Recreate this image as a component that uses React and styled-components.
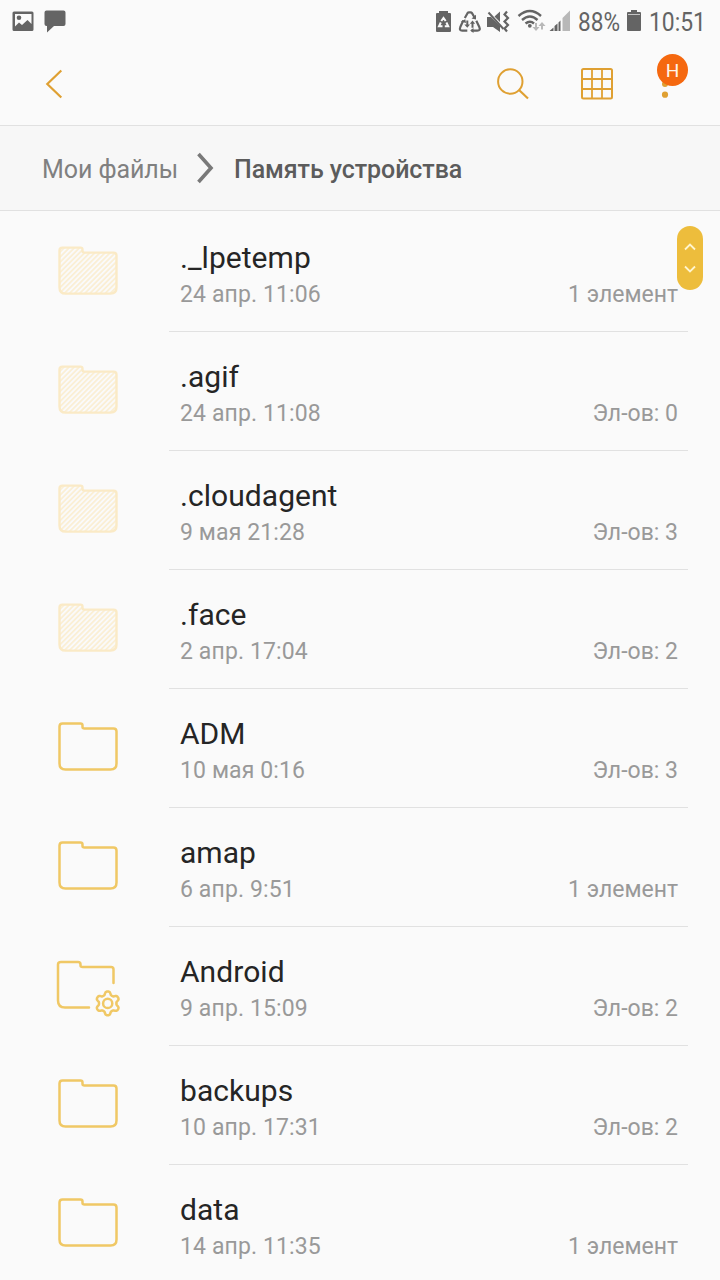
import React from "react";
import styled, { createGlobalStyle } from "styled-components";

const colors = {
  page: "#fafafa",
  path: "#f7f7f7",
  line: "#e1e1e1",
  status: "#646464",
  accent: "#dfa032",
  folder: "#f0c865",
  hidden: "#faeac6",
  title: "#252525",
  muted: "#999999"
};

const GlobalStyle = createGlobalStyle`
  * {
    box-sizing: border-box;
  }
  body {
    margin: 0;
    background: ${colors.page};
    font-family: Roboto, "Noto Sans", sans-serif;
  }
  svg {
    display: block;
    flex: none;
  }
`;

const Screen = styled.div`
  width: 720px;
  height: 1280px;
  overflow: hidden;
  background: ${colors.page};
`;

const StatusBar = styled.div`
  display: flex;
  justify-content: space-between;
  height: 44px;
  padding: 0 12px 0 10px;
  color: ${colors.status};
`;

const StatusGroup = styled.div`
  display: flex;
`;

const StatusText = styled.span`
  width: ${props => props.$width}px;
  font-size: 26px;
  line-height: 44px;
  white-space: nowrap;
  transform: scaleX(${props => props.$squeeze});
  transform-origin: left;
`;

const Toolbar = styled.header`
  display: flex;
  justify-content: space-between;
  align-items: center;
  height: 82px;
  padding: 0 28px 2px 40px;
  border-bottom: 1px solid ${colors.line};
`;

const ToolbarActions = styled.div`
  display: flex;
`;

const IconButton = styled.button`
  position: relative;
  width: 40px;
  height: 48px;
  margin-right: ${props => props.$gap || 0}px;
  padding: 0;
  border: 0;
  background: none;
  color: ${colors.accent};
`;

const Badge = styled.span`
  position: absolute;
  top: -6px;
  left: 5px;
  width: 31px;
  height: 32px;
  border-radius: 50%;
  background: #f5680f;
  color: #fff4e8;
  font: 19px/33px Roboto, sans-serif;
  text-align: center;
`;

const Breadcrumb = styled.nav`
  display: flex;
  align-items: center;
  height: 85px;
  padding: 2px 0 0 42px;
  border-bottom: 1px solid ${colors.line};
  background: ${colors.path};
  font-size: 25px;
  letter-spacing: -0.08px;
`;

const Crumb = styled.span`
  width: ${props => props.$width}px;
  font-weight: ${props => (props.$current ? 500 : 400)};
  color: ${props => (props.$current ? "#5c5c5c" : "#808080")};
  white-space: nowrap;
`;

const FileList = styled.ul`
  position: relative;
  margin: 0;
  padding: 2px 32px 0 50px;
  list-style: none;
`;

const Row = styled.li`
  display: flex;
  height: 119px;
`;

const FolderBox = styled.div`
  width: 119px;
  padding-top: 26px;
`;

const RowBody = styled.div`
  flex: 1;
  padding: 25px 10px 0 11px;
  border-bottom: 1px solid ${colors.line};
`;

const FileName = styled.div`
  font-size: 30px;
  line-height: 40px;
  letter-spacing: 0.05px;
  color: ${colors.title};
`;

const FileInfo = styled.div`
  display: flex;
  justify-content: space-between;
  font-size: 23px;
  line-height: 34px;
  color: ${colors.muted};
`;

const FileDate = styled.span`
  letter-spacing: 0.12px;
`;

const ScrollHandle = styled.div`
  position: absolute;
  top: 15px;
  right: 17.500px;
  width: 26px;
  height: 64px;
  border-radius: 13px;
  background: #edbd3c;
`;

const files = [
  { name: "._lpetemp", date: "24 апр. 11:06", count: "1 элемент", kind: "hidden" },
  { name: ".agif", date: "24 апр. 11:08", count: "Эл-ов: 0", kind: "hidden" },
  { name: ".cloudagent", date: "9 мая 21:28", count: "Эл-ов: 3", kind: "hidden" },
  { name: ".face", date: "2 апр. 17:04", count: "Эл-ов: 2", kind: "hidden" },
  { name: "ADM", date: "10 мая 0:16", count: "Эл-ов: 3" },
  { name: "amap", date: "6 апр. 9:51", count: "1 элемент" },
  { name: "Android", date: "9 апр. 15:09", count: "Эл-ов: 2", kind: "system" },
  { name: "backups", date: "10 апр. 17:31", count: "Эл-ов: 2" },
  { name: "data", date: "14 апр. 11:35", count: "1 элемент" }
];

const folderPath =
  "M12 9H30Q32 9 32 11V12.5Q32 14 34 14H63Q66 14 66 17V49Q66 55 60 55H15Q9 55 9 49V12Q9 9 12 9Z";

// gear outline with six rounded teeth
function gearPath(cx, cy) {
  const points = [];
  for (let i = 0; i <= 72; i++) {
    const a = (i / 72) * Math.PI * 2;
    const r = 10.3 - 1.7 * Math.tanh(1.8 * Math.cos(a * 6));
    points.push(
      `${(cx + r * Math.cos(a)).toFixed(2)} ${(cy + r * Math.sin(a)).toFixed(2)}`
    );
  }
  return `M${points.join("L")}Z`;
}

function Folder({ kind }) {
  if (kind === "system") {
    return (
      <svg width="76" height="66" viewBox="0 0.6 76 66" fill="none" stroke={colors.folder} strokeWidth="2.5" strokeLinecap="round" strokeLinejoin="round">
        <path d="M39 55H15Q8 55 8 48V12Q8 9.500 11 9.500H28Q30.500 9.500 30.500 12V13Q30.500 14.500 32.500 14.500H61Q63.500 14.500 63.500 17V30.500" />
        <path d={gearPath(57.7, 51)} />
        <circle cx="57.7" cy="51" r="4.600" />
      </svg>
    );
  }
  if (kind === "hidden") {
    return (
      <svg width="76" height="66" viewBox="-0.5 0.4 76 66">
        <defs>
          <pattern id="hatch" width="3.6" height="3.6" patternUnits="userSpaceOnUse" patternTransform="rotate(45)">
            <path d="M1.800 0V3.600" stroke={colors.hidden} strokeWidth="1.300" />
          </pattern>
        </defs>
        <path d={folderPath} fill="url(#hatch)" stroke={colors.hidden} strokeWidth="2.4" />
      </svg>
    );
  }
  return (
    <svg width="76" height="66" viewBox="-0.5 0.6 76 66">
      <path d={folderPath} fill="none" stroke={colors.folder} strokeWidth="2.5" />
    </svg>
  );
}

function Notifications() {
  return (
    <svg width="60" height="44" viewBox="10 0 60 44" fill="currentColor">
      <path fillRule="evenodd" d="M14 11.500H32Q33.500 11.500 33.500 13V29.500Q33.500 31 32 31H14Q12.500 31 12.500 29.500V13Q12.500 11.500 14 11.500ZM15 14V26.500L19 22.500L22 25L27.500 20L31.500 24V14Z" />
      <circle cx="19" cy="17.800" r="2.300" />
      <path d="M46.500 10.500H63.500Q65.500 10.500 65.500 12.500V24Q65.500 26 63.500 26H54L47 32.500V26H46.500Q44.500 26 44.500 24V12.500Q44.500 10.500 46.500 10.500Z" />
    </svg>
  );
}

function SystemIcons() {
  return (
    <svg width="144" height="44" viewBox="434 0 144 44" fill="none" stroke="currentColor">
      <path d="M439 11H448V13H450Q451 13 451 14V31Q451 32 450 32H437Q436 32 436 31V14Q436 13 437 13H439Z" fill="currentColor" stroke="none" />
      <g stroke="#fafafa" strokeWidth="2">
        <path d="M441.300 21L443.500 18L445.700 21M440.800 22.500L439 26.200H442.500M444.800 26.200H448.200L446.400 22.500" />
      </g>
      <g strokeWidth="2.200" strokeLinejoin="round">
        <path d="M464.800 18L467.500 13.200Q468 12.400 469 12.400H470.500Q471.500 12.400 472 13.200L474.300 17" />
        <path d="M463.300 20.500L460.300 27Q459 30.600 462.200 30.600H467.300" />
        <path d="M471.500 30.600H477.300Q480.800 30.600 479.300 27L476.300 20.800" />
      </g>
      <g fill="currentColor" stroke="none">
        <path d="M476 14.800V19.500L471.500 18.500ZM473.500 28V33L470.200 30.600ZM460.800 21.500L465.300 19.300L466 23Z" />
        <path d="M464.300 24.500H466.300V20.500H468.300V24.500H470L467.300 27.800ZM469.800 23.800L472.500 20.500L475.200 23.800H473.500V27.800H471.500V23.800Z" />
        <path d="M487 17H491L500 26V32L493 27H487ZM494.500 16.500L500 11.500V22Z" />
      </g>
      <path d="M488.500 12.500L503.500 29" strokeWidth="2" />
      <path d="M507 11.500L504.500 14.500L508 18L504.500 21.500L508 25L504.500 28.500L507 31.500" strokeWidth="2.200" />
      <g strokeWidth="2.400">
        <path d="M518.500 16Q530 6 541 16M522 20Q530 13 537.500 20M525.500 23.500Q530 19.800 534 23.500" />
      </g>
      <circle cx="529.800" cy="25.800" r="1.900" fill="currentColor" stroke="none" />
      <g fill="#b8b8b8" stroke="none">
        <path d="M535 23H537V27H539.500L536 31L532.500 27H535ZM541 29.500V26H538.500L542 22L545.500 26H543V29.500Z" />
        <path d="M562.500 18L570 10.500V31H562.500Z" />
      </g>
      <g fill="currentColor" stroke="none">
        <path d="M549.500 31L553.500 27.500V31ZM554.500 26L557.500 23.500V31H554.500ZM558.500 22.500L560.500 20.500V31H558.500Z" />
      </g>
    </svg>
  );
}

function BatteryIcon() {
  return (
    <svg width="24" height="44" viewBox="625 0 24 44" fill="currentColor">
      <path d="M631 10H637V12H640Q641 12 641 13V30Q641 31 640 31H628Q627 31 627 30V13Q627 12 628 12H631Z" />
      <path d="M628 14.500H640" stroke="#c4c4c4" strokeWidth="1" />
    </svg>
  );
}

function FileRow({ file }) {
  return (
    <Row>
      <FolderBox>
        <Folder kind={file.kind} />
      </FolderBox>
      <RowBody>
        <FileName>{file.name}</FileName>
        <FileInfo>
          <FileDate>{file.date}</FileDate>
          <span>{file.count}</span>
        </FileInfo>
      </RowBody>
    </Row>
  );
}

export default function App() {
  return (
    <Screen>
      <GlobalStyle />
      <StatusBar>
        <Notifications />
        <StatusGroup>
          <SystemIcons />
          <StatusText $width={47} $squeeze={0.87}>88%</StatusText>
          <BatteryIcon />
          <StatusText $width={59} $squeeze={0.88}>10:51</StatusText>
        </StatusGroup>
      </StatusBar>
      <Toolbar>
        <IconButton aria-label="Назад">
          <svg width="40" height="48" viewBox="40 60 40 48" fill="none" stroke="currentColor" strokeWidth="2.200">
            <path d="M61.300 70.500L47.300 84L61.300 97.500" />
          </svg>
        </IconButton>
        <ToolbarActions>
          <IconButton aria-label="Поиск" $gap={44}>
            <svg width="40" height="48" viewBox="492 60 40 48" fill="none" stroke="currentColor" strokeWidth="2">
              <circle cx="510.300" cy="81.500" r="12.200" />
              <path d="M519 90L528 98.500" strokeWidth="2.200" />
            </svg>
          </IconButton>
          <IconButton aria-label="Сетка" $gap={36}>
            <svg width="40" height="48" viewBox="576 60 40 48" fill="none" stroke="currentColor" strokeWidth="2">
              <rect x="582" y="69" width="30" height="29.500" rx="1.500" />
              <path d="M592 69V98.500M602 69V98.500M582 79H612M582 89H612" strokeWidth="1.800" />
            </svg>
          </IconButton>
          <IconButton aria-label="Ещё">
            <svg width="40" height="48" viewBox="652 60 40 48" fill="currentColor">
              <circle cx="665" cy="84" r="3" />
              <circle cx="665" cy="94.700" r="3.100" />
            </svg>
            <Badge>Н</Badge>
          </IconButton>
        </ToolbarActions>
      </Toolbar>
      <Breadcrumb>
        <Crumb $width={150}>Мои файлы</Crumb>
        <svg width="42" height="40" viewBox="192 149 42 40" fill="none" stroke="#797979" strokeWidth="3.600">
          <path d="M198.500 154L211 168L198.500 182" />
        </svg>
        <Crumb $current>Память устройства</Crumb>
      </Breadcrumb>
      <FileList>
        {files.map(file => (
          <FileRow key={file.name} file={file} />
        ))}
        <ScrollHandle>
          <svg width="26" height="64" viewBox="0 0 26 64" fill="none" stroke="#fff5cf" strokeWidth="1.800">
            <path d="M8 23.500L13 18.500L18 23.500M8 40.500L13 45.500L18 40.500" />
          </svg>
        </ScrollHandle>
      </FileList>
    </Screen>
  );
}
